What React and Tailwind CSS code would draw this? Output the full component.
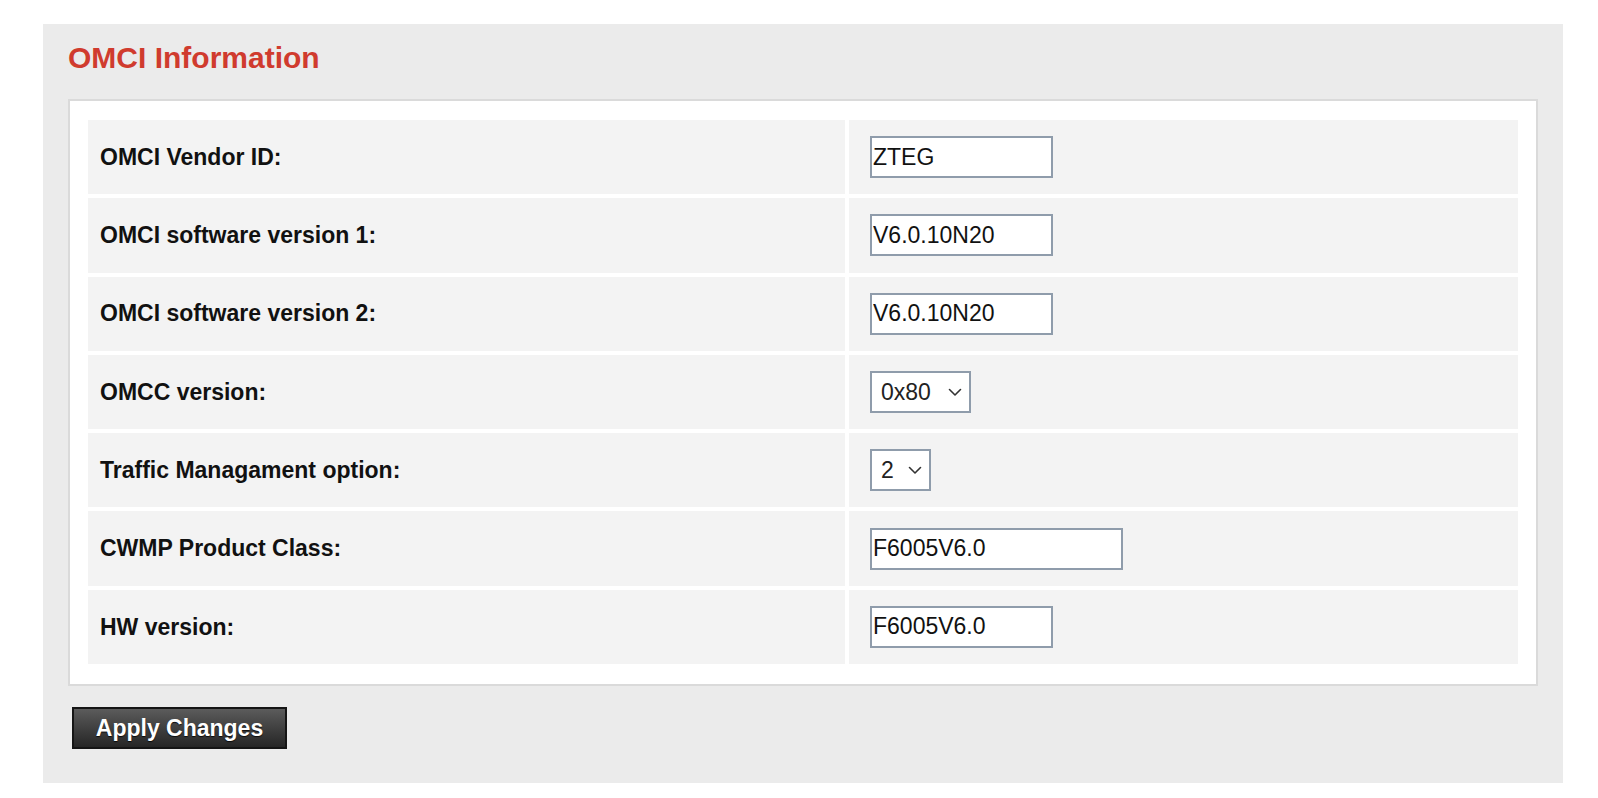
const rows = [
  { label: 'OMCI Vendor ID:', type: 'input', value: 'ZTEG', width: 'w-[183px]' },
  { label: 'OMCI software version 1:', type: 'input', value: 'V6.0.10N20', width: 'w-[183px]' },
  { label: 'OMCI software version 2:', type: 'input', value: 'V6.0.10N20', width: 'w-[183px]' },
  { label: 'OMCC version:', type: 'select', value: '0x80', options: ['0x80', '0x81', '0x82', '0x83', '0x84', '0x85', '0x86', '0x87'], width: 'w-[101px]' },
  { label: 'Traffic Managament option:', type: 'select', value: '2', options: ['0', '1', '2'], width: 'w-[61px]' },
  { label: 'CWMP Product Class:', type: 'input', value: 'F6005V6.0', width: 'w-[253px]' },
  { label: 'HW version:', type: 'input', value: 'F6005V6.0', width: 'w-[183px]' },
];

function Chevron() {
  return (
    <svg width="14" height="9" viewBox="0 0 14 9" fill="none" className="shrink-0">
      <path d="M1.5 1.5 L7 7 L12.5 1.5" stroke="#333" strokeWidth="1.6" strokeLinecap="round" strokeLinejoin="round" />
    </svg>
  );
}

function Field({ row }) {
  if (row.type === 'select') {
    return (
      <label
        className={`flex items-center justify-between h-[42px] ${row.width} bg-white border-2 border-[#8f9cab] pl-[9px] pr-[7px]`}
      >
        <select
          defaultValue={row.value}
          className="appearance-none bg-transparent outline-none text-[23px] text-[#222] leading-none"
        >
          {row.options.map((o) => (
            <option key={o} value={o}>{o}</option>
          ))}
        </select>
        <Chevron />
      </label>
    );
  }
  return (
    <input
      type="text"
      defaultValue={row.value}
      className={`h-[42px] ${row.width} bg-white border-2 border-[#8f9cab] px-[1px] text-[23px] text-[#111] outline-none`}
    />
  );
}

export default function App() {
  return (
    <div
      className="min-h-screen bg-white pt-[24px] pl-[43px]"
      style={{ fontFamily: '"Liberation Sans", Arial, sans-serif' }}
    >
      <div className="w-[1520px] h-[759px] bg-[#ebebeb] px-[25px] pt-[16px]">
        {/* Title */}
        <h1 className="text-[30px] leading-[36px] font-bold text-[#d03b2e]">
          OMCI Information
        </h1>

        {/* Form box */}
        <div className="mt-[23px] bg-white border-2 border-[#dadada] px-[18px] pt-[19px] pb-[20px]">
          <div className="grid grid-cols-[757px_1fr] gap-[4px]">
            {rows.map((row) => (
              <div key={row.label} className="contents">
                <div className="h-[74.3px] bg-[#f3f3f3] flex items-center pl-[12px] text-[23px] font-bold text-[#111]">
                  {row.label}
                </div>
                <div className="h-[74.3px] bg-[#f3f3f3] flex items-center pl-[21px]">
                  <Field row={row} />
                </div>
              </div>
            ))}
          </div>
        </div>

        {/* Apply button */}
        <div className="mt-[21px] pl-[4px]">
          <button
            className="w-[215px] h-[42px] border-2 border-[#151515] bg-gradient-to-b from-[#5c5c5c] to-[#262626] text-white text-[23px] font-bold [text-shadow:0_1px_1px_rgba(0,0,0,0.8)]"
          >
            Apply Changes
          </button>
        </div>
      </div>
    </div>
  );
}
